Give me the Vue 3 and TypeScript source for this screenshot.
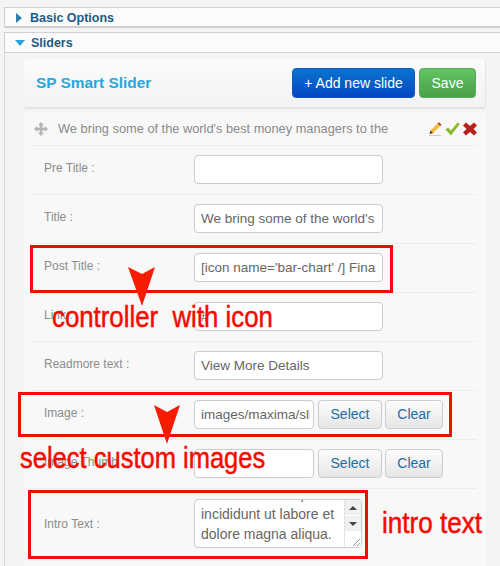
<script setup lang="ts">
const simpleRows = [
  { label: 'Pre Title :', value: '' },
  { label: 'Title :', value: "We bring some of the world's best money managers" },
  { label: 'Post Title :', value: "[icon name='bar-chart' /] Financial planning" },
  { label: 'Link :', value: '#' },
  { label: 'Readmore text :', value: 'View More Details' },
]
const imageRows = [
  { label: 'Image :', value: 'images/maxima/slide.png' },
  { label: 'Image Thumb :', value: '' },
]
</script>

<template>
  <div class="page">
    <div class="accordion">
      <div class="acc-head">
        <span class="arrow-right"></span>
        <span>Basic Options</span>
      </div>
      <div class="acc-head open">
        <span class="arrow-down"></span>
        <span>Sliders</span>
      </div>
      <div class="acc-body">
        <div class="toolbar">
          <h3>SP Smart Slider</h3>
          <div class="toolbar-btns">
            <button class="btn-add">+ Add new slide</button>
            <button class="btn-save">Save</button>
          </div>
        </div>

        <div class="item">
          <div class="item-head">
            <svg class="move" width="14" height="14" viewBox="0 0 14 14">
              <path d="M7 0 10 3.200H8.300V5.700H10.800V4L14 7l-3.200 3V8.300H8.300v2.500H10L7 14l-3-3.200h1.700V8.300H3.200V10L0 7l3.200-3v1.700h2.500V3.200H4z" fill="#b4b4b4" />
            </svg>
            <span class="item-title">We bring some of the world's best money managers to the</span>
            <div class="item-icons">
              <svg width="14" height="14" viewBox="0 0 14 14">
                <path d="M1 13.500h12" stroke="#ccc" stroke-width="1" />
                <path d="M1.500 12 2.500 8.500 9.500 1.500 12.300 3.900 5 11z" fill="#f2b938" />
                <path d="M9.500 1.500 10.800.3 13.500 2.700 12.300 3.900z" fill="#c8322a" />
                <path d="M1.500 12 2.500 8.500 5 11z" fill="#4a3a28" />
              </svg>
              <svg width="15" height="14" viewBox="0 0 15 14">
                <path d="M.5 7.500 3 5.500 6 8.500 12.500 .5 14.800 2 6 13.500z" fill="#8cb82b" />
              </svg>
              <svg width="14" height="14" viewBox="0 0 14 14">
                <path d="M3 .5 7 4 11 .5 14 3.500 10.500 7 14 10.500 11 13.500 7 10 3 13.500 0 10.500 3.500 7 0 3.500z" fill="#b5221c" />
              </svg>
            </div>
          </div>

          <div v-for="row in simpleRows" :key="row.label" class="row">
            <label>{{ row.label }}</label>
            <input class="field" type="text" :value="row.value" readonly />
          </div>

          <div v-for="row in imageRows" :key="row.label" class="row">
            <label>{{ row.label }}</label>
            <input class="field short" type="text" :value="row.value" readonly />
            <button class="btn-plain select">Select</button>
            <button class="btn-plain clear">Clear</button>
          </div>

          <div class="row last">
            <label>Intro Text :</label>
            <div class="area">
              <div class="area-text">
                <p>do eiusmod tempor</p>
                <p>incididunt ut labore et</p>
                <p>dolore magna aliqua.</p>
              </div>
              <div class="scroll">
                <span class="scroll-btn"><i class="up"></i></span>
                <span class="scroll-btn"><i class="down"></i></span>
                <span class="scroll-grip">
                  <svg width="9" height="9" viewBox="0 0 9 9">
                    <path d="M1 8 8 1M5 8 8 5" stroke="#999" stroke-width="1" />
                  </svg>
                </span>
              </div>
            </div>
          </div>
        </div>
      </div>
    </div>

    <!-- red notes drawn over the form -->
    <div class="box box-post"></div>
    <div class="box box-image"></div>
    <div class="box box-intro"></div>
    <svg class="pointer pointer-a" width="28" height="40" viewBox="0 0 28 40">
      <path d="M0 0 14 7 27 0 14 39z" fill="#f51c00" />
    </svg>
    <svg class="pointer pointer-b" width="28" height="40" viewBox="0 0 28 40">
      <path d="M0 0 13 7 26 0 13 39z" fill="#f51c00" />
    </svg>
    <span class="note note-a">controller&nbsp; with icon</span>
    <span class="note note-b">select custom images</span>
    <span class="note note-c">intro text</span>
  </div>
</template>

<style>
body {
  background: #f4f4f4;
}
</style>

<style scoped>
.page {
  position: relative;
  width: 500px;
  height: 566px;
  overflow: hidden;
  background: #f4f4f4;
  font-family: "Liberation Sans", Arial, sans-serif;
}

.accordion {
  padding: 7px 0 0 4px;
  margin-right: -4px;
}

.acc-head {
  display: flex;
  align-items: center;
  gap: 8px;
  height: 21px;
  box-sizing: border-box;
  padding-left: 11px;
  padding-top: 1px;
  margin-bottom: 4px;
  background: #fbfbfb;
  border: 1px solid #d0d0d0;
  border-width: 1px 1px 2px;
  font-size: 12.500px;
  font-weight: bold;
  color: #1d5a86;
}

.acc-head.open {
  margin-bottom: 0;
  border-width: 1px;
  padding-left: 10px;
  padding-top: 0;
  gap: 6px;
}

.arrow-right {
  width: 0;
  height: 0;
  border-left: 6px solid #2a7fa8;
  border-top: 5px solid transparent;
  border-bottom: 5px solid transparent;
}

.arrow-down {
  width: 0;
  height: 0;
  border-top: 6px solid #2ba3d4;
  border-left: 5px solid transparent;
  border-right: 5px solid transparent;
}

.acc-body {
  border-left: 1px solid #d8d8d8;
  padding: 6px 0 0 19px;
  height: 520px;
}

.toolbar {
  width: 462px;
  height: 50px;
  box-sizing: border-box;
  display: flex;
  align-items: center;
  justify-content: space-between;
  padding: 0 9px 0 12px;
  background: linear-gradient(#fbfbfb, #f3f3f3);
  border-bottom: 2px solid #e2e2e2;
  border-right: 1px solid #e4e4e4;
  border-radius: 4px;
}

.toolbar h3 {
  margin: 0;
  font-size: 15.400px;
  font-weight: bold;
  color: #2ba5de;
}

.toolbar-btns {
  display: flex;
  gap: 4px;
}

.toolbar button {
  height: 30px;
  padding: 0;
  color: #fff;
  font: 14px "Liberation Sans", Arial, sans-serif;
  border-radius: 4px;
}

.btn-add {
  width: 123px;
  background: linear-gradient(#0a74cf, #0446c4);
  border: 1px solid #0a5cb4;
}

.btn-save {
  width: 57px;
  background: linear-gradient(#62c462, #4aa04a);
  border: 1px solid #5aa85a;
}

.item {
  width: 462px;
  height: 460px;
  margin-top: 3px;
  box-sizing: border-box;
  padding: 0 9px 0 10px;
  background: #f8f8f8;
  border-radius: 4px;
}

.item-head {
  display: flex;
  align-items: center;
  height: 33px;
  border-bottom: 1px solid #ececec;
}

.move {
  flex: none;
}

.item-title {
  margin-left: 10px;
  font-size: 12.800px;
  color: #8a8a8a;
  white-space: nowrap;
}

.item-icons {
  display: flex;
  gap: 3px;
  margin-left: auto;
}

.row {
  display: flex;
  align-items: center;
  height: 49px;
  box-sizing: border-box;
  padding-left: 10px;
  border-bottom: 1px solid #ececec;
}

.row.last {
  border-bottom: 0;
  height: 69px;
}

.row label {
  flex: none;
  width: 150px;
  margin-top: -5px;
  font-size: 12px;
  color: #8c8c8c;
}

.row.last label {
  margin-top: 0;
}

.field {
  width: 189px;
  height: 29px;
  box-sizing: border-box;
  padding: 0 6px;
  margin-bottom: 2px;
  background: #fff;
  border: 1px solid #ccc;
  border-radius: 4px;
  font: 13.500px "Liberation Sans", Arial, sans-serif;
  color: #666;
  outline: none;
}

.field.short {
  width: 120px;
  padding-right: 3px;
}

.btn-plain {
  height: 29px;
  padding: 0;
  margin-left: 4px;
  margin-bottom: 2px;
  background: linear-gradient(#fcfcfc, #e6e6e6);
  border: 1px solid #ccc;
  border-radius: 4px;
  font: 14px "Liberation Sans", Arial, sans-serif;
  color: #1f6da3;
}

.btn-plain.select {
  width: 64px;
}

.btn-plain.clear {
  width: 58px;
  margin-left: 3px;
}

.area {
  display: flex;
  width: 168px;
  height: 49px;
  box-sizing: border-box;
  background: #fff;
  border: 1px solid #ccc;
  border-radius: 4px;
  overflow: hidden;
}

.area-text {
  flex: 1;
  margin-top: -16px;
  padding-left: 6px;
  font-size: 14px;
  line-height: 20px;
  color: #666;
}

.area-text p {
  margin: 0;
  white-space: nowrap;
}

.scroll {
  flex: none;
  width: 16px;
  display: flex;
  flex-direction: column;
  border-left: 1px solid #e4e4e4;
}

.scroll-btn {
  display: flex;
  align-items: center;
  justify-content: center;
  height: 15px;
  background: #f0f0f0;
  border-bottom: 1px solid #fff;
}

.scroll-btn i {
  width: 0;
  height: 0;
  border-left: 4px solid transparent;
  border-right: 4px solid transparent;
}

.scroll-btn .up {
  border-bottom: 4px solid #444;
}

.scroll-btn .down {
  border-top: 4px solid #444;
}

.scroll-grip {
  flex: 1;
  display: flex;
  align-items: flex-end;
  justify-content: flex-end;
  background: #fff;
}

.box {
  position: absolute;
  box-sizing: border-box;
  border: 3px solid #f20d00;
}

.box-post {
  left: 30px;
  top: 245px;
  width: 363px;
  height: 48px;
}

.box-image {
  left: 18px;
  top: 392px;
  width: 434px;
  height: 45px;
}

.box-intro {
  left: 28px;
  top: 490px;
  width: 340px;
  height: 69px;
}

.pointer {
  position: absolute;
}

.pointer-a {
  left: 128px;
  top: 267px;
}

.pointer-b {
  left: 154px;
  top: 405px;
}

.note {
  position: absolute;
  font-size: 30px;
  line-height: 34px;
  color: #f50a00;
  white-space: nowrap;
  transform-origin: left top;
  -webkit-text-stroke: 0.5px #f50a00;
}

.note-a {
  left: 52px;
  top: 300px;
  transform: scaleX(0.86);
}

.note-b {
  left: 20px;
  top: 441px;
  transform: scaleX(0.85);
}

.note-c {
  left: 382px;
  top: 506px;
  transform: scaleX(0.87);
}
</style>
